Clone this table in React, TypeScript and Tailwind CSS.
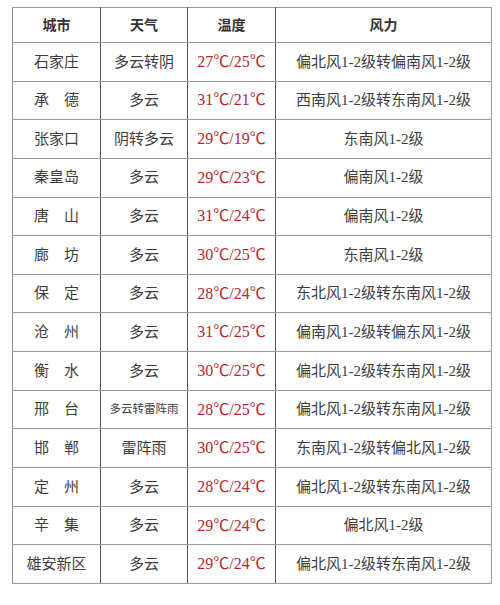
import React from 'react';

interface Row {
  city: string;
  weather: string;
  temp: string;
  wind: string;
  small?: boolean;
}

const rows: Row[] = [
  { city: '石家庄', weather: '多云转阴', temp: '27℃/25℃', wind: '偏北风1-2级转偏南风1-2级' },
  { city: '承　德', weather: '多云', temp: '31℃/21℃', wind: '西南风1-2级转东南风1-2级' },
  { city: '张家口', weather: '阴转多云', temp: '29℃/19℃', wind: '东南风1-2级' },
  { city: '秦皇岛', weather: '多云', temp: '29℃/23℃', wind: '偏南风1-2级' },
  { city: '唐　山', weather: '多云', temp: '31℃/24℃', wind: '偏南风1-2级' },
  { city: '廊　坊', weather: '多云', temp: '30℃/25℃', wind: '东南风1-2级' },
  { city: '保　定', weather: '多云', temp: '28℃/24℃', wind: '东北风1-2级转东南风1-2级' },
  { city: '沧　州', weather: '多云', temp: '31℃/25℃', wind: '偏南风1-2级转偏东风1-2级' },
  { city: '衡　水', weather: '多云', temp: '30℃/25℃', wind: '偏北风1-2级转东南风1-2级' },
  { city: '邢　台', weather: '多云转雷阵雨', temp: '28℃/25℃', wind: '偏北风1-2级转东南风1-2级', small: true },
  { city: '邯　郸', weather: '雷阵雨', temp: '30℃/25℃', wind: '东南风1-2级转偏北风1-2级' },
  { city: '定　州', weather: '多云', temp: '28℃/24℃', wind: '偏北风1-2级转东南风1-2级' },
  { city: '辛　集', weather: '多云', temp: '29℃/24℃', wind: '偏北风1-2级' },
  { city: '雄安新区', weather: '多云', temp: '29℃/24℃', wind: '偏北风1-2级转东南风1-2级' },
];

const font = { fontFamily: '"Liberation Serif", "Noto Sans CJK SC", serif' };

export default function App() {
  return (
    <div className="w-[500px] h-[605px] bg-white pt-[7px] pl-[12px]" style={font}>
      <table className="border-collapse table-fixed w-[479px] text-[#3d3d3d]">
        <colgroup>
          <col className="w-[88px]" />
          <col className="w-[87px]" />
          <col className="w-[88px]" />
          <col className="w-[216px]" />
        </colgroup>
        <thead>
          <tr className="h-[35px] text-[14px] font-bold text-[#333]">
            <th className="border-y border-[#9a9a9a] border-l border-l-[#8a8a8a] border-r border-r-[#555] font-bold">城市</th>
            <th className="border-y border-[#9a9a9a] border-r border-r-[#555] font-bold">天气</th>
            <th className="border-y border-[#9a9a9a] border-r border-r-[#555] font-bold">温度</th>
            <th className="border-y border-[#9a9a9a] border-r border-r-[#9a9a9a] font-bold">风力</th>
          </tr>
        </thead>
        <tbody>
          {rows.map((r) => (
            <tr key={r.city} className="h-[38.65px] text-[15px]">
              <td className="border-y border-[#9a9a9a] border-l border-l-[#8a8a8a] border-r border-r-[#555] text-center">{r.city}</td>
              <td className={`border-y border-[#9a9a9a] border-r border-r-[#555] text-center ${r.small ? 'text-[11.5px]' : ''}`}>{r.weather}</td>
              <td className="border-y border-[#9a9a9a] border-r border-r-[#555] text-center text-[16px] text-[#b8262b]">{r.temp}</td>
              <td className="border-y border-[#9a9a9a] border-r border-r-[#9a9a9a] text-center">{r.wind}</td>
            </tr>
          ))}
        </tbody>
      </table>
    </div>
  );
}
